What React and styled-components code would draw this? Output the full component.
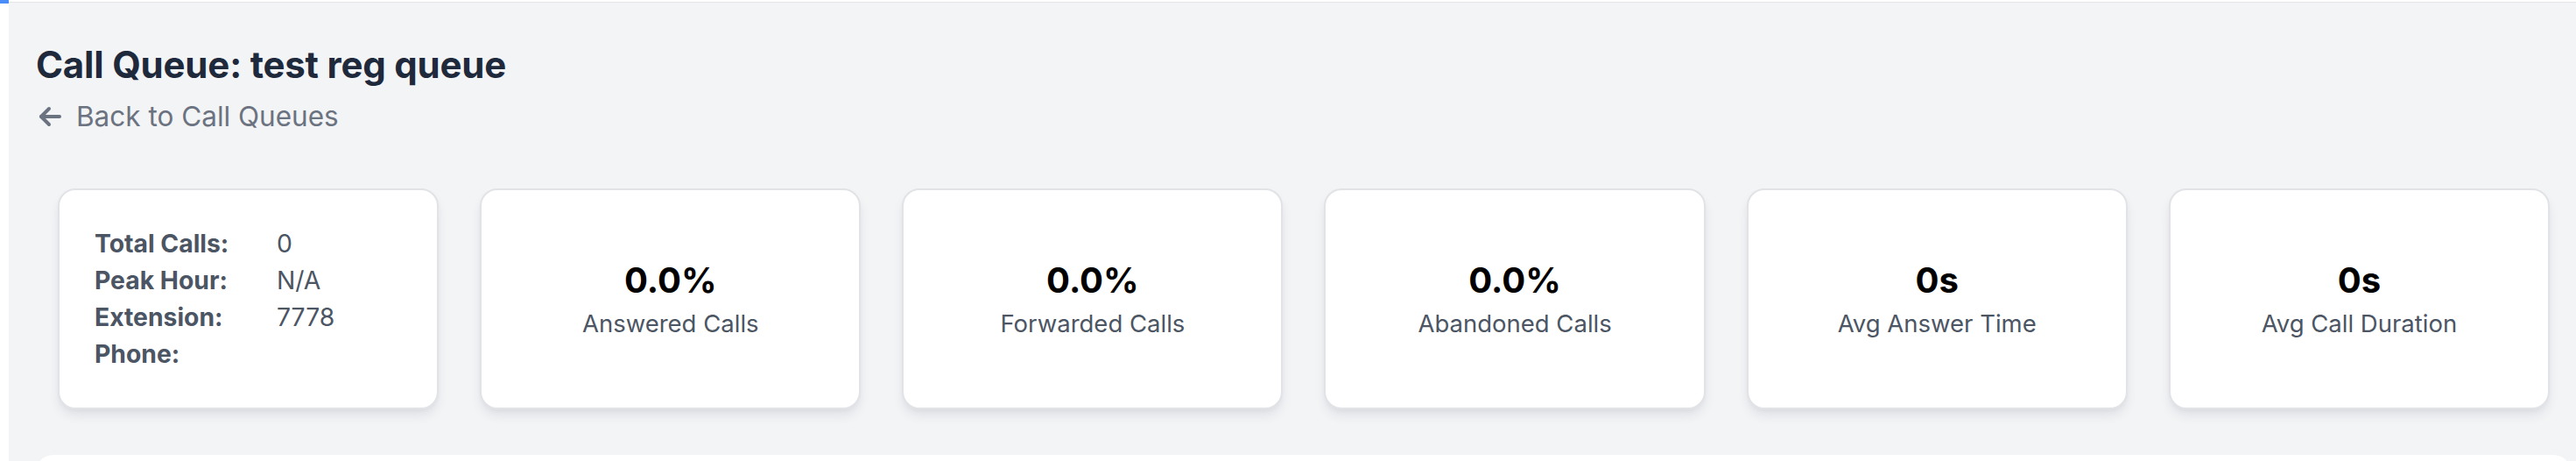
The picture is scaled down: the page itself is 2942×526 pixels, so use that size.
import React from 'react';
import styled, { createGlobalStyle } from 'styled-components';

const GlobalStyle = createGlobalStyle`
  html, body {
    margin: 0;
    padding: 0;
    background: #ffffff;
    font-family: Inter, "Noto Sans", "Liberation Sans", sans-serif;
  }
  * { box-sizing: border-box; }
`;

const stats = [
  { value: '0.0%', label: 'Answered Calls' },
  { value: '0.0%', label: 'Forwarded Calls' },
  { value: '0.0%', label: 'Abandoned Calls' },
  { value: '0s', label: 'Avg Answer Time' },
  { value: '0s', label: 'Avg Call Duration' },
];

const details = [
  { label: 'Total Calls:', value: '0' },
  { label: 'Peak Hour:', value: 'N/A' },
  { label: 'Extension:', value: '7778' },
  { label: 'Phone:', value: '' },
];

function App() {
  return (
    <>
      <GlobalStyle />
      <Shell>
        <Rail>
          <RailMark />
        </Rail>
        <Main>
          <Title>Call Queue: test reg queue</Title>
          <BackLink href="#">
            <svg width="28" height="28" viewBox="0 0 28 28" fill="none" stroke="currentColor" strokeWidth="4" strokeLinecap="round" strokeLinejoin="round">
              <path d="M25 14H4" />
              <path d="M13 5l-9 9 9 9" />
            </svg>
            Back to Call Queues
          </BackLink>

          <CardRow>
            <Card>
              <DetailGrid>
                {details.map((d) => (
                  <React.Fragment key={d.label}>
                    <DetailLabel>{d.label}</DetailLabel>
                    <DetailValue>{d.value}</DetailValue>
                  </React.Fragment>
                ))}
              </DetailGrid>
            </Card>
            {stats.map((s) => (
              <Card key={s.label} $center>
                <StatValue>{s.value}</StatValue>
                <StatLabel>{s.label}</StatLabel>
              </Card>
            ))}
          </CardRow>

          <Panel />
        </Main>
      </Shell>
    </>
  );
}

export default App;

const Shell = styled.div`
  display: flex;
  min-height: 526px;
  padding-top: 2px;
`;

const Rail = styled.aside`
  width: 10px;
  flex-shrink: 0;
  background: #ffffff;
  margin-top: -2px;
`;

const RailMark = styled.div`
  height: 4px;
  background: #4b8df8;
`;

const Main = styled.main`
  flex: 1;
  background: #f3f4f6;
  border-top: 1.5px solid #e3e5e9;
  padding: 44px 6px 0 31px;
  overflow: hidden;
`;

const Title = styled.h1`
  margin: 0;
  font-size: 42px;
  line-height: 53px;
  font-weight: 700;
  color: #1e293b;
  letter-spacing: -0.2px;
`;

const BackLink = styled.a`
  display: inline-flex;
  align-items: center;
  gap: 16px;
  margin-top: 9px;
  padding-left: 2px;
  font-size: 31.5px;
  line-height: 48px;
  color: #6b7280;
  text-decoration: none;
`;

const CardRow = styled.div`
  display: grid;
  grid-template-columns: repeat(6, 1fr);
  gap: 47px;
  padding: 0 24px 0 25px;
  margin-top: 58px;
`;

const Card = styled.div`
  height: 252px;
  background: #ffffff;
  border: 2px solid #e1e3e7;
  border-radius: 20px;
  box-shadow: 0 8px 14px -2px rgba(17, 24, 39, 0.09), 0 3px 6px -2px rgba(17, 24, 39, 0.05);
  display: flex;
  flex-direction: column;
  justify-content: center;
  align-items: ${(p) => (p.$center ? 'center' : 'stretch')};
  padding: 0 40px;
  text-align: ${(p) => (p.$center ? 'center' : 'left')};
`;

const DetailGrid = styled.div`
  display: grid;
  grid-template-columns: 208px auto;
  font-size: 28.3px;
  line-height: 42px;
  color: #4b5563;
`;

const DetailLabel = styled.span`
  font-weight: 700;
`;

const DetailValue = styled.span`
  font-weight: 400;
`;

const StatValue = styled.div`
  font-size: 40px;
  line-height: 56px;
  font-weight: 700;
  color: #000000;
`;

const StatLabel = styled.div`
  font-size: 27.5px;
  line-height: 42px;
  color: #4b5563;
`;

const Panel = styled.section`
  margin-top: 52px;
  height: 120px;
  background: #ffffff;
  border-radius: 20px;
`;
